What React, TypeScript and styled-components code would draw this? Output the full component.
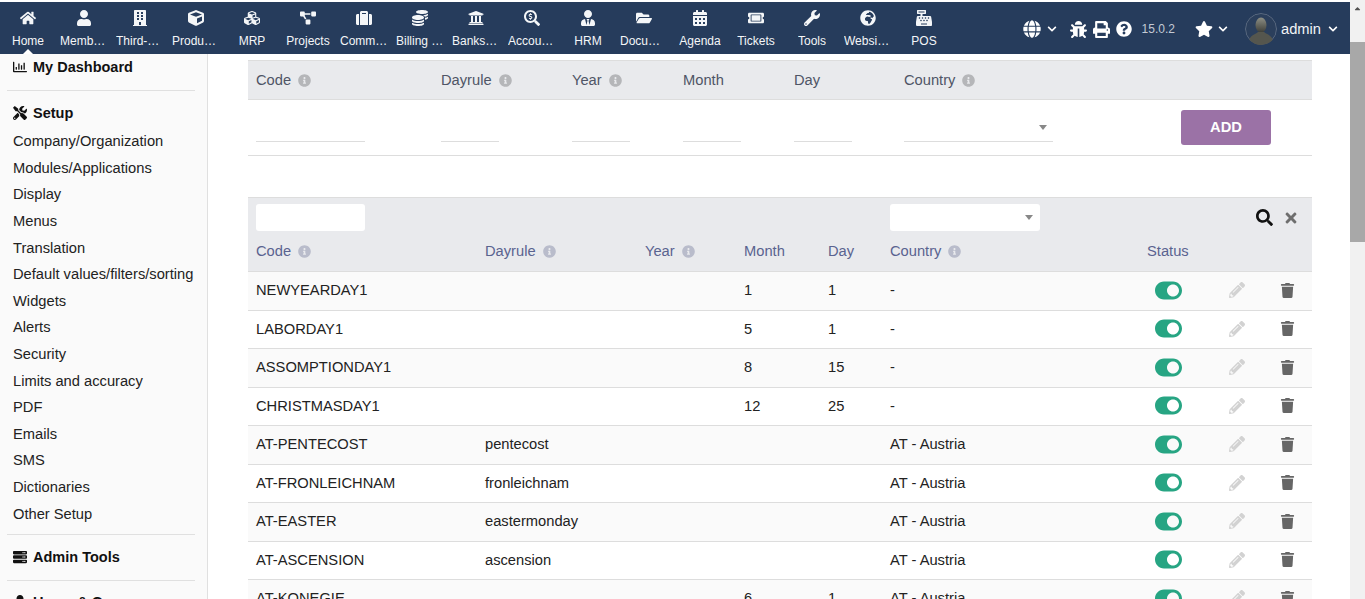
import React from "react";
import styled, { createGlobalStyle } from "styled-components";
import {
  FaHome, FaUser, FaBuilding, FaCube, FaCubes, FaProjectDiagram, FaSuitcase, FaCoins, FaUniversity,
  FaSearchDollar, FaUserTie, FaFolderOpen, FaCalendarAlt, FaTicketAlt, FaWrench, FaGlobeAfrica,
  FaCashRegister, FaGlobe, FaChevronDown, FaBug, FaPrint, FaQuestionCircle, FaStar, FaRegChartBar,
  FaTools, FaServer, FaInfoCircle, FaSearch, FaTimes, FaPencilAlt, FaTrash, FaToggleOn, FaCaretUp,
} from "react-icons/fa";

const GlobalStyle = createGlobalStyle`
  html, body { margin: 0; height: 100%; overflow: hidden; background: #fff; }
  body { font-family: "Liberation Sans", Arial, sans-serif; font-size: 14.7px; color: #222; }
`;

const Page = styled.div`
  display: flex;
  height: 599px;
  overflow: hidden;
`;

const Viewport = styled.div`
  flex: 1;
  min-width: 0;
  display: flex;
  flex-direction: column;
`;

const ScrollTrack = styled.div`
  width: 15px;
  background: #f1f1f1;
  display: flex;
  flex-direction: column;
  align-items: center;
`;

const ScrollArrow = styled.div`
  height: 17px;
  display: flex;
  align-items: center;
  justify-content: center;
  color: #505050;
  font-size: 9px;
`;

const ScrollThumb = styled.div`
  width: 100%;
  height: 200px;
  margin-top: 25px;
  background: #a8a8a8;
`;

const TopBar = styled.header`
  height: 52px;
  margin-top: 2px;
  flex: none;
  background: #263c5c;
  display: flex;
  color: #fff;
`;

const MainMenu = styled.nav`
  display: flex;
  flex: 1;
`;

const MenuItem = styled.a<{ $active?: boolean }>`
  position: relative;
  width: 56px;
  flex: none;
  display: flex;
  flex-direction: column;
  align-items: center;
  color: #f4f6f8;
  font-size: 12px;
  padding-top: 7px;
  box-sizing: border-box;

  ${(p) =>
    p.$active &&
    `&::after {
      content: "";
      position: absolute;
      bottom: 0;
      left: 50%;
      margin-left: -5px;
      border: 5px solid transparent;
      border-top: 0;
      border-bottom-color: #fff;
    }`}
`;

const MenuIcon = styled.span`
  height: 18px;
  display: flex;
  align-items: center;
  font-size: 16px;
`;

const MenuLabel = styled.span`
  margin-top: 7px;
  line-height: 14px;
  max-width: 48px;
  white-space: pre;
  overflow: hidden;
  text-overflow: ellipsis;
`;

const TopRight = styled.div`
  display: flex;
  align-items: center;
  padding-top: 2px;
  padding-right: 12px;
`;

const TopIcon = styled.span<{ $size?: number; $left?: number }>`
  display: flex;
  font-size: ${(p) => p.$size ?? 17}px;
  margin-left: ${(p) => p.$left ?? 0}px;
`;

const Version = styled.span`
  font-size: 12px;
  color: #c3cad4;
  margin-left: 10px;
`;

const Avatar = styled.svg`
  width: 32px;
  height: 32px;
  margin-left: 17px;
  border-radius: 50%;
`;

const UserName = styled.span`
  font-size: 14.7px;
  margin-left: 4px;
  color: #f1f3f6;
`;

const Body = styled.div`
  flex: 1;
  min-height: 0;
  display: flex;
`;

const Sidebar = styled.aside`
  width: 188px;
  flex: none;
  background: #fafafa;
  border-right: 1px solid #e0e0e0;
  padding: 0 12px 0 7px;
  overflow: hidden;
`;

const SideSection = styled.div<{ $line?: boolean; $top?: number; $bottom?: number }>`
  border-bottom: ${(p) => (p.$line ? "1px solid #e0e0e0" : "none")};
  padding-top: ${(p) => p.$top ?? 0}px;
  padding-bottom: ${(p) => p.$bottom ?? 0}px;
`;

const SideTitle = styled.div<{ $height: number }>`
  height: ${(p) => p.$height}px;
  display: flex;
  align-items: center;
  gap: 6px;
  padding-left: 6px;
  font-size: 14.5px;
  font-weight: 700;
  color: #111;
  white-space: nowrap;

  svg { font-size: 14px; flex: none; }
`;

const SideLink = styled.div`
  height: 26.6px;
  line-height: 26.6px;
  padding-left: 6px;
  color: #222;
  white-space: nowrap;
`;

const Content = styled.main`
  flex: 1;
  min-width: 0;
  overflow: hidden;
  padding: 6px 38px 0 40px;
`;

const addColumns = "185px 131px 111px 111px 110px 285px 1fr";
const listColumns = "229px 160px 99px 84px 62px 257px 58px 80px 20px 1fr";

const FormHead = styled.div`
  display: grid;
  grid-template-columns: ${addColumns};
  align-items: center;
  height: 38px;
  background: #e9eaed;
  border-top: 1px solid #ddd;
  border-bottom: 1px solid #ddd;
  color: #555;
`;

const HeadCell = styled.div<{ $list?: boolean }>`
  padding-left: 8px;
  display: flex;
  align-items: center;
  gap: 7px;
  color: ${(p) => (p.$list ? "#5a6390" : "#4f5566")};
  white-space: nowrap;

  svg { font-size: 13px; color: ${(p) => (p.$list ? "#b9bccb" : "#b5b6b9")}; }
`;

const FormRow = styled.div`
  display: grid;
  grid-template-columns: ${addColumns};
  height: 55px;
  border-bottom: 1px solid #ddd;
`;

const FieldCell = styled.div`
  padding-left: 8px;
  display: flex;
`;

const LineInput = styled.div<{ $width: number }>`
  width: ${(p) => p.$width}px;
  height: 41px;
  border-bottom: 1px solid #ddd;
  position: relative;
`;

const Caret = styled.span<{ $top: number; $right: number }>`
  position: absolute;
  top: ${(p) => p.$top}px;
  right: ${(p) => p.$right}px;
  border: 4px solid transparent;
  border-bottom: 0;
  border-top: 5px solid #888;
`;

const AddButton = styled.button`
  width: 90px;
  height: 35px;
  margin-top: 10px;
  padding: 0 0 2px;
  border: 0;
  border-radius: 3px;
  background: #9b72a6;
  color: #fff;
  font: 700 14.7px "Liberation Sans", Arial, sans-serif;
  justify-self: start;
`;

const ListTable = styled.section`
  margin-top: 41px;
`;

const ListHead = styled.div`
  height: 75px;
  box-sizing: border-box;
  background: #e9eaed;
  border-top: 1px solid #ddd;
  border-bottom: 1px solid #ddd;
`;

const FilterRow = styled.div`
  display: grid;
  grid-template-columns: ${listColumns};
  height: 33px;
  align-items: end;
`;

const FilterBox = styled.div<{ $width: number }>`
  position: relative;
  width: ${(p) => p.$width}px;
  height: 27px;
  margin-left: 8px;
  background: #fff;
  border-radius: 3px;
`;

const FilterActions = styled.div`
  grid-column: 7 / -1;
  justify-self: end;
  margin-right: 13px;
  display: flex;
  align-items: center;
  gap: 10px;
  height: 27px;
`;

const SearchIcon = styled(FaSearch)`
  font-size: 17px;
  color: #111;
`;

const ClearIcon = styled(FaTimes)`
  font-size: 16px;
  color: #6e6e6e;
`;

const ColumnRow = styled.div`
  display: grid;
  grid-template-columns: ${listColumns};
  height: 40px;
  align-items: center;
`;

const Row = styled.div<{ $odd: boolean }>`
  display: grid;
  grid-template-columns: ${listColumns};
  height: 38.5px;
  box-sizing: border-box;
  align-items: center;
  padding-bottom: 1px;
  border-bottom: 1px solid #ddd;
  background: ${(p) => (p.$odd ? "#fafafa" : "#fff")};
`;

const Cell = styled.div`
  padding-left: 8px;
  color: #222;
  white-space: nowrap;
`;

const IconCell = styled.div`
  display: flex;
  justify-content: center;
`;

const Toggle = styled(FaToggleOn)`
  font-size: 27px;
  color: #27a583;
`;

const Pen = styled(FaPencilAlt)`
  font-size: 16px;
  color: #d2d2d2;
`;

const Bin = styled(FaTrash)`
  font-size: 15px;
  color: #666;
`;

const menu: [string, React.ReactNode][] = [
  ["Home", <FaHome />],
  ["Members", <FaUser />],
  ["Third-parties", <FaBuilding />],
  ["Products | Services", <FaCube />],
  ["MRP", <FaCubes />],
  ["Projects", <FaProjectDiagram />],
  ["Commerce", <FaSuitcase />],
  ["Billing | Payment", <FaCoins />],
  ["Banks | Cash", <FaUniversity />],
  ["Accounting", <FaSearchDollar />],
  ["HRM", <FaUserTie />],
  ["Documents", <FaFolderOpen />],
  ["Agenda", <FaCalendarAlt />],
  ["Tickets", <FaTicketAlt />],
  ["Tools", <FaWrench />],
  ["Websites", <FaGlobeAfrica />],
  ["POS", <FaCashRegister />],
];

const setupLinks = [
  "Company/Organization", "Modules/Applications", "Display", "Menus", "Translation",
  "Default values/filters/sorting", "Widgets", "Alerts", "Security", "Limits and accuracy",
  "PDF", "Emails", "SMS", "Dictionaries", "Other Setup",
];

const rows = [
  ["NEWYEARDAY1", "", "", "1", "1", "-"],
  ["LABORDAY1", "", "", "5", "1", "-"],
  ["ASSOMPTIONDAY1", "", "", "8", "15", "-"],
  ["CHRISTMASDAY1", "", "", "12", "25", "-"],
  ["AT-PENTECOST", "pentecost", "", "", "", "AT - Austria"],
  ["AT-FRONLEICHNAM", "fronleichnam", "", "", "", "AT - Austria"],
  ["AT-EASTER", "eastermonday", "", "", "", "AT - Austria"],
  ["AT-ASCENSION", "ascension", "", "", "", "AT - Austria"],
  ["AT-KONEGIE", "", "", "6", "1", "AT - Austria"],
];

function Hint({ label, list }: { label: string; list?: boolean }) {
  return (
    <HeadCell $list={list}>
      {label} <FaInfoCircle />
    </HeadCell>
  );
}

export default function App() {
  return (
    <Page>
      <GlobalStyle />
      <Viewport>
        <TopBar>
          <MainMenu>
            {menu.map(([label, icon], i) => (
              <MenuItem key={label} $active={i === 0}>
                <MenuIcon>{icon}</MenuIcon>
                <MenuLabel>{label}</MenuLabel>
              </MenuItem>
            ))}
          </MainMenu>
          <TopRight>
            <TopIcon $size={18}><FaGlobe /></TopIcon>
            <TopIcon $size={10} $left={6}><FaChevronDown /></TopIcon>
            <TopIcon $left={13}><FaBug /></TopIcon>
            <TopIcon $left={6}><FaPrint /></TopIcon>
            <TopIcon $size={16} $left={6}><FaQuestionCircle /></TopIcon>
            <Version>15.0.2</Version>
            <TopIcon $size={18} $left={20}><FaStar /></TopIcon>
            <TopIcon $size={10} $left={5}><FaChevronDown /></TopIcon>
            <Avatar viewBox="0 0 32 32">
              <defs>
                <linearGradient id="avatarShade" x1="0" y1="0" x2="0" y2="1">
                  <stop offset="0" stopColor="#8d8f85" />
                  <stop offset="1" stopColor="#3d3e38" />
                </linearGradient>
              </defs>
              <circle cx="16" cy="16" r="15.5" fill="#2b3f5c" stroke="#5b6a80" />
              <ellipse cx="16" cy="12" rx="5.5" ry="7.5" fill="url(#avatarShade)" />
              <path d="M4 28c1-6 7-7 9-9h6c2 2 8 3 9 9a15 15 0 0 1-24 0z" fill="#55564e" />
            </Avatar>
            <UserName>admin</UserName>
            <TopIcon $size={10} $left={7}><FaChevronDown /></TopIcon>
          </TopRight>
        </TopBar>
        <Body>
          <Sidebar>
            <SideSection $line $bottom={10}>
              <SideTitle $height={26}><FaRegChartBar />My Dashboard</SideTitle>
            </SideSection>
            <SideSection $line $top={7.5} $bottom={6.4}>
              <SideTitle $height={29.8}><FaTools />Setup</SideTitle>
              {setupLinks.map((l) => (
                <SideLink key={l}>{l}</SideLink>
              ))}
            </SideSection>
            <SideSection $line>
              <SideTitle $height={45}><FaServer />Admin Tools</SideTitle>
            </SideSection>
            <SideSection>
              <SideTitle $height={42}><FaUser />Users &amp; Groups</SideTitle>
            </SideSection>
          </Sidebar>
          <Content>
            <FormHead>
              <Hint label="Code" />
              <Hint label="Dayrule" />
              <Hint label="Year" />
              <HeadCell>Month</HeadCell>
              <HeadCell>Day</HeadCell>
              <Hint label="Country" />
            </FormHead>
            <FormRow>
              <FieldCell><LineInput $width={109} /></FieldCell>
              <FieldCell><LineInput $width={58} /></FieldCell>
              <FieldCell><LineInput $width={58} /></FieldCell>
              <FieldCell><LineInput $width={58} /></FieldCell>
              <FieldCell><LineInput $width={58} /></FieldCell>
              <FieldCell>
                <LineInput $width={149}><Caret $top={25} $right={6} /></LineInput>
              </FieldCell>
              <AddButton>ADD</AddButton>
            </FormRow>
            <ListTable>
              <ListHead>
                <FilterRow>
                  <FilterBox $width={109} />
                  <div />
                  <div />
                  <div />
                  <div />
                  <FilterBox $width={150}><Caret $top={11} $right={7} /></FilterBox>
                  <FilterActions>
                    <SearchIcon />
                    <ClearIcon />
                  </FilterActions>
                </FilterRow>
                <ColumnRow>
                  <Hint label="Code" list />
                  <Hint label="Dayrule" list />
                  <Hint label="Year" list />
                  <HeadCell $list>Month</HeadCell>
                  <HeadCell $list>Day</HeadCell>
                  <Hint label="Country" list />
                  <HeadCell $list>Status</HeadCell>
                </ColumnRow>
              </ListHead>
              {rows.map((r, i) => (
                <Row key={r[0]} $odd={i % 2 === 0}>
                  {r.map((c, j) => (
                    <Cell key={j}>{c}</Cell>
                  ))}
                  <IconCell><Toggle /></IconCell>
                  <IconCell><Pen /></IconCell>
                  <IconCell><Bin /></IconCell>
                </Row>
              ))}
            </ListTable>
          </Content>
        </Body>
      </Viewport>
      <ScrollTrack>
        <ScrollArrow><FaCaretUp /></ScrollArrow>
        <ScrollThumb />
      </ScrollTrack>
    </Page>
  );
}
